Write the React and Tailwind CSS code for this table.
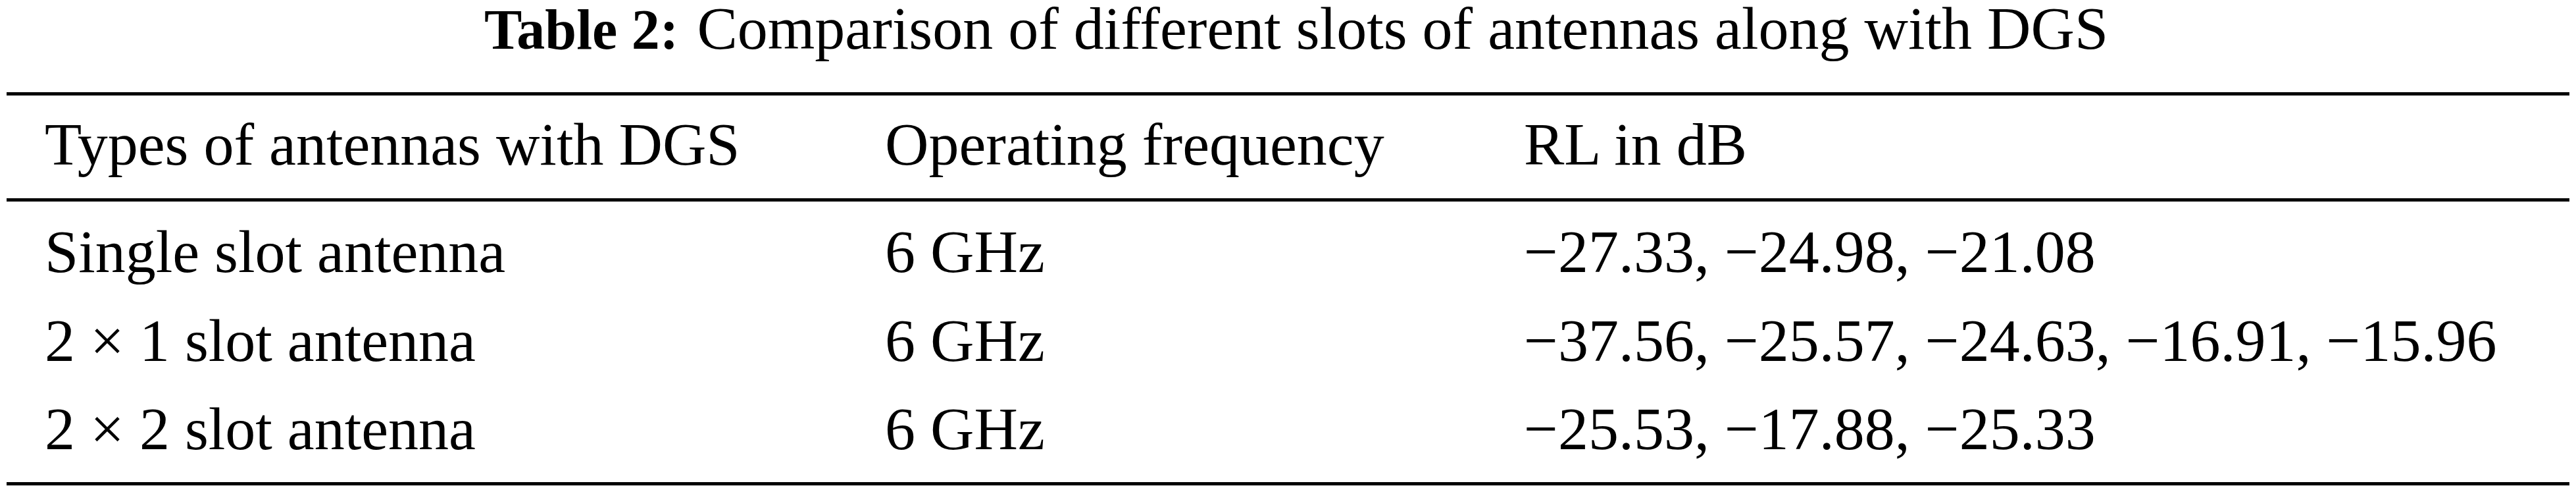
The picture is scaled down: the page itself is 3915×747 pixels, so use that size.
export default function App() {
  const rows = [
    ["Single slot antenna", "6 GHz", "\u221227.33, \u221224.98, \u221221.08"],
    ["2 \u00d7 1 slot antenna", "6 GHz", "\u221237.56, \u221225.57, \u221224.63, \u221216.91, \u221215.96"],
    ["2 \u00d7 2 slot antenna", "6 GHz", "\u221225.53, \u221217.88, \u221225.33"],
  ];
  return (
    <div
      className="w-[3915px] h-[747px] bg-white text-black px-[10px] text-[92px] leading-[89px]"
      style={{ fontFamily: '"Liberation Serif", "Times New Roman", serif' }}
    >
      <div className="text-center whitespace-nowrap h-[86px] leading-[86px] pl-[25px]">
        <span className="font-bold text-[86px]">Table 2:</span>
        <span className="ml-[5px]"> Comparison of different slots of antennas along with DGS</span>
      </div>
      <div className="mt-[54px] h-[5px] bg-black" />
      <div className="grid grid-cols-[1277px_971px_1fr] pl-[58px] pt-[30px] pb-[37px] whitespace-nowrap">
        <div>Types of antennas with DGS</div>
        <div>Operating frequency</div>
        <div>RL in dB</div>
      </div>
      <div className="h-[5px] bg-black" />
      <div className="pt-[9px] pb-[13px]">
        {rows.map((r, i) => (
          <div
            key={i}
            className="grid grid-cols-[1277px_971px_1fr] pl-[58px] leading-[134.5px] whitespace-nowrap"
          >
            <div>{r[0]}</div>
            <div>{r[1]}</div>
            <div>{r[2]}</div>
          </div>
        ))}
      </div>
      <div className="h-[5px] bg-black" />
    </div>
  );
}
